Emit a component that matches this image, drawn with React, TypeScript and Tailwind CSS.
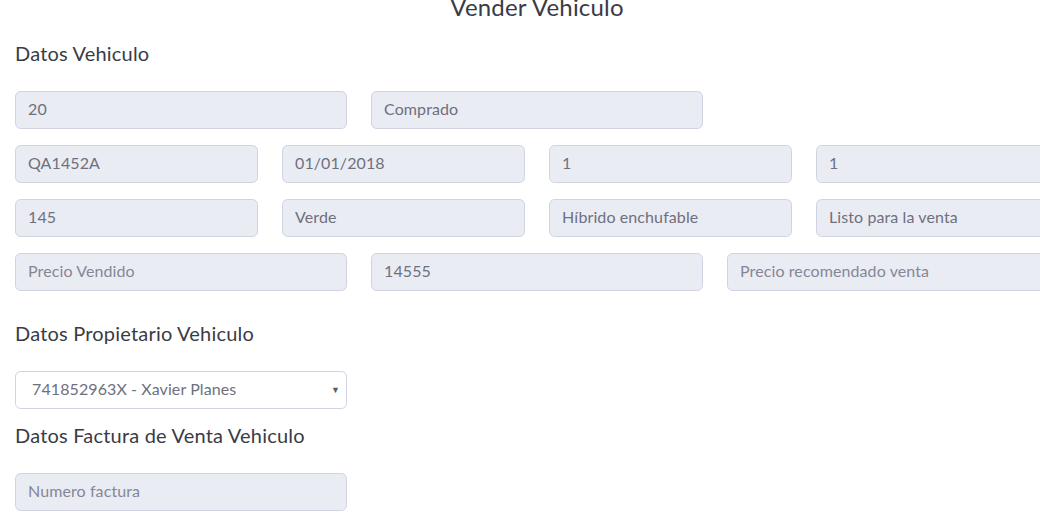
import React from 'react'

const font = { fontFamily: 'Lato, "Open Sans", sans-serif' }

function Field({ value, placeholder }: { value?: string; placeholder?: string }) {
  return (
    <input
      disabled
      defaultValue={value}
      placeholder={placeholder}
      className="h-[38px] w-full rounded-[5.6px] border border-[#d1d3e2] bg-[#eaecf4] pl-3 pr-3 pb-[4px] text-base tracking-[0.1px] text-[#6e707e] placeholder:text-[#858796] outline-none"
    />
  )
}

function Heading({ children }: { children: React.ReactNode }) {
  return <h5 className="text-[20px] leading-[24px] font-normal tracking-[0.2px] text-[#3a3b45]">{children}</h5>
}

export default function App() {
  return (
    <div className="w-[1040px] h-[518px] overflow-hidden bg-white" style={font}>
      <div className="w-[1044px] ml-[15px]">
        <h4 className="-mt-[7px] text-center text-[24px] leading-[28px] tracking-[0.2px] text-[#3a3b45]">Vender Vehiculo</h4>

        <div className="mt-[20px]">
          <Heading>Datos Vehiculo</Heading>
        </div>

        <div className="mt-[26px] flex flex-col gap-4">
          <div className="grid grid-cols-3 gap-6">
            <Field value="20" />
            <Field value="Comprado" />
          </div>
          <div className="grid grid-cols-4 gap-6">
            <Field value="QA1452A" />
            <Field value="01/01/2018" />
            <Field value="1" />
            <Field value="1" />
          </div>
          <div className="grid grid-cols-4 gap-6">
            <Field value="145" />
            <Field value="Verde" />
            <Field value="Híbrido enchufable" />
            <Field value="Listo para la venta" />
          </div>
          <div className="grid grid-cols-3 gap-6">
            <Field placeholder="Precio Vendido" />
            <Field value="14555" />
            <Field placeholder="Precio recomendado venta" />
          </div>
        </div>

        <div className="mt-[30px]">
          <Heading>Datos Propietario Vehiculo</Heading>
        </div>

        <div className="mt-[26px] grid grid-cols-3 gap-6">
          <div className="relative h-[38px] rounded-[5.6px] border border-[#d1d3e2] bg-white flex items-center pl-4 pr-8 pb-[2px] text-base tracking-[0.1px] text-[#6e707e]">
            741852963X - Xavier Planes
            <span className="absolute right-[6px] top-1/2 -translate-y-1/2 text-[9px] text-[#5a5c69]">▼</span>
          </div>
        </div>

        <div className="mt-[14px]">
          <Heading>Datos Factura de Venta Vehiculo</Heading>
        </div>

        <div className="mt-[26px] grid grid-cols-3 gap-6">
          <Field placeholder="Numero factura" />
        </div>
      </div>
    </div>
  )
}
